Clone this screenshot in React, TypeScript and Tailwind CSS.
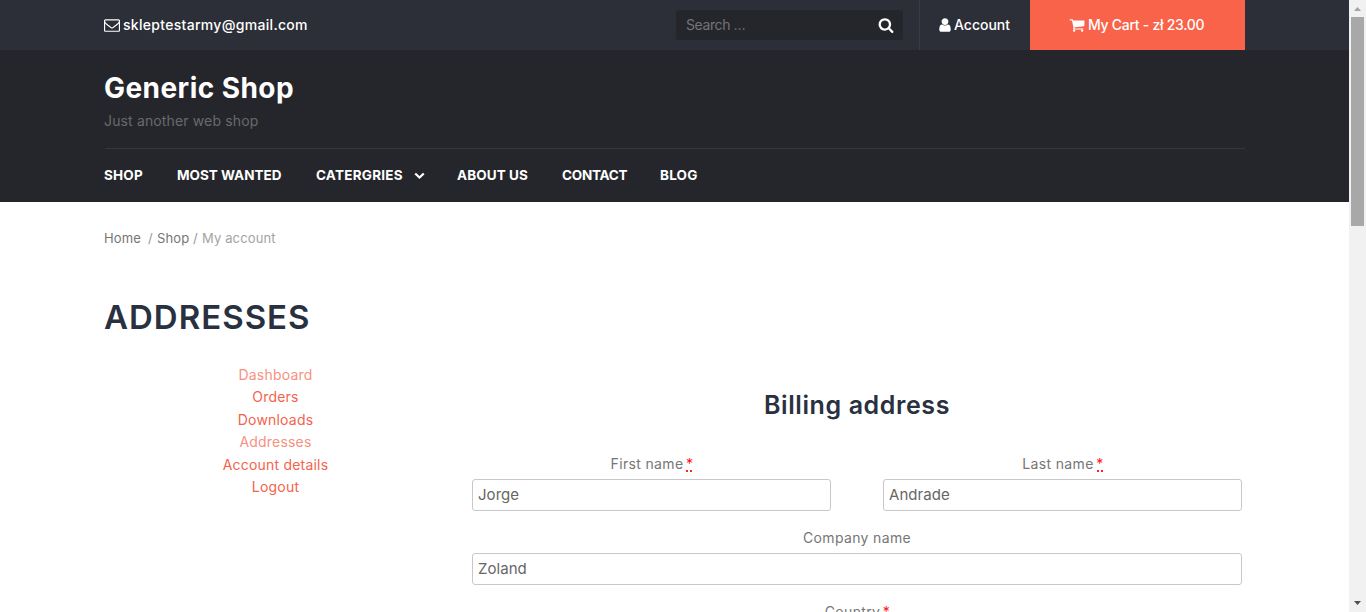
import type { ReactNode } from "react";

function Glyph({ d, className }: { d: string; className: string }) {
  return (
    <svg viewBox="0 0 1792 1792" fill="currentColor" className={className}>
      <path d={d} />
    </svg>
  );
}

const ENVELOPE =
  "M1664 1504v-768q-32 36-69 66-268 206-426 338-51 43-83 67t-86.5 48.5-102.5 24.5h-2q-48 0-102.5-24.5t-86.5-48.5-83-67q-158-132-426-338-37-30-69-66v768q0 13 9.5 22.5t22.5 9.5h1472q13 0 22.5-9.5t9.5-22.5zm0-1051v-24.5l-.5-13-3-12.5-5.5-9-9-7.5-14-2.5h-1472q-13 0-22.5 9.5t-9.5 22.5q0 168 147 284 193 152 401 317 6 5 35 29.5t46 37.5 44.5 31.5 50.5 27.5 43 9h2q20 0 43-9t50.5-27.5 44.5-31.5 46-37.5 35-29.5q208-165 401-317 54-43 100.5-115.5t46.5-131.5zm128-37v1088q0 66-47 113t-113 47h-1472q-66 0-113-47t-47-113v-1088q0-66 47-113t113-47h1472q66 0 113 47t47 113z";
const SEARCH =
  "M1216 832q0-185-131.5-316.5t-316.5-131.5-316.5 131.5-131.5 316.5 131.5 316.5 316.5 131.5 316.5-131.5 131.5-316.5zm512 832q0 52-38 90t-90 38q-54 0-90-38l-343-342q-179 124-399 124-143 0-273.5-55.5t-225-150-150-225-55.5-273.5 55.5-273.5 150-225 225-150 273.5-55.5 273.5 55.5 225 150 150 225 55.5 273.5q0 220-124 399l343 343q37 37 37 90z";
const USER =
  "M1536 1399q0 109-62.5 187t-150.5 78h-854q-88 0-150.5-78t-62.5-187q0-85 8.5-160.5t31.5-152 58.5-131 94-89 134.5-34.5q131 128 313 128t313-128q76 0 134.5 34.5t94 89 58.5 131 31.5 152 8.5 160.5zm-256-887q0 159-112.5 271.5t-271.5 112.5-271.5-112.5-112.5-271.5 112.5-271.5 271.5-112.5 271.5 112.5 112.5 271.5z";
const CART =
  "M704 1536q0 52-38 90t-90 38-90-38-38-90 38-90 90-38 90 38 38 90zm896 0q0 52-38 90t-90 38-90-38-38-90 38-90 90-38 90 38 38 90zm128-1088v512q0 24-16.5 42.5t-40.5 21.5l-1044 122q13 60 13 70 0 16-24 64h920q26 0 45 19t19 45-19 45-45 19h-1024q-26 0-45-19t-19-45q0-11 8-31.5t16-36 21.5-40 15.5-29.5l-177-823h-204q-26 0-45-19t-19-45 19-45 45-19h256q16 0 28.5 6.5t19.5 15.5 13 24.5 8 26 5.5 29.5 4.5 26h1201q26 0 45 19t19 45z";

const menu = [
  { label: "SHOP", box: "w-[73px] tracking-[0.2px]" },
  { label: "MOST WANTED", box: "w-[139px]" },
  { label: "CATERGRIES", box: "w-[141px] tracking-[0.25px]", arrow: true },
  { label: "ABOUT US", box: "w-[105px] tracking-[0.1px]" },
  { label: "CONTACT", box: "w-[98px] tracking-[-0.25px]" },
  { label: "BLOG", box: "tracking-[0.2px]" },
];

const links = [
  { label: "Dashboard", faded: true },
  { label: "Orders" },
  { label: "Downloads" },
  { label: "Addresses", faded: true },
  { label: "Account details" },
  { label: "Logout" },
];

function Label({ children, required }: { children: ReactNode; required?: boolean }) {
  return (
    <label className="flex h-[30px] items-center justify-center gap-[3px] pb-px whitespace-nowrap text-[14px] tracking-[0.35px] text-[#767676]">
      <span>{children}</span>
      {required && (
        <span className="mt-px flex h-4 w-[6px] items-start justify-center border-b-2 border-dotted border-[#ff2222] text-[14px] leading-4 tracking-normal text-[#ff1111]">
          *
        </span>
      )}
    </label>
  );
}

function Field({ value }: { value: string }) {
  return (
    <input
      defaultValue={value}
      className="block h-8 w-full rounded-[3px] border border-[#c8c8c8] bg-white px-[5px] pb-[2px] text-[15px] tracking-[0.05px] text-[#666666] outline-none"
    />
  );
}

export default function App() {
  return (
    <div className="flex h-[612px] w-[1366px] overflow-hidden bg-white font-['Inter',sans-serif]">
      <div className="w-[1349px] overflow-hidden">
        <div className="h-[50px] bg-[#2c2f38] text-white">
          <div className="ml-[104px] flex h-full w-[1141px] items-center">
            <Glyph d={ENVELOPE} className="h-4 w-4" />
            <span className="ml-[3px] pb-[2px] text-[14px] font-medium tracking-[0.3px]">skleptestarmy@gmail.com</span>
            <div className="ml-auto flex h-[30px] w-[227px] items-center justify-between rounded-[3px] bg-[#25262b] pr-[9px] pl-[10px]">
              <span className="pb-[2px] text-[14px] tracking-[-0.4px] text-[#737477]">Search …</span>
              <Glyph d={SEARCH} className="h-4 w-4" />
            </div>
            <div className="ml-4 flex h-full w-[111px] items-center border-l border-[#393c45] pl-[17px]">
              <Glyph d={USER} className="h-4 w-4" />
              <span className="ml-[1px] pb-[2px] text-[14px] font-medium">Account</span>
            </div>
            <div className="flex h-full w-[215px] items-center bg-[#f8634a] pl-[39px]">
              <Glyph d={CART} className="h-4 w-4" />
              <span className="ml-[3px] pb-[2px] text-[14px] font-medium tracking-[-0.28px]">My Cart - zł 23.00</span>
            </div>
          </div>
        </div>

        <header className="h-[152px] bg-[#25262b] text-white">
          <div className="ml-[105px] w-[1140px]">
            <div className="h-[99px] border-b border-[#36373c] pt-[17px]">
              <h1 className="-ml-px h-10 text-[28px] leading-[42px] font-bold tracking-[0.45px]">Generic Shop</h1>
              <p className="mt-1 -ml-px text-[14px] leading-5 tracking-[0.14px] text-[#696969]">Just another web shop</p>
            </div>
            <nav className="-ml-px flex h-[53px] items-center text-[13.5px] font-bold whitespace-nowrap">
              {menu.map((m) => (
                <div key={m.label} className={`flex items-center ${m.box}`}>
                  {m.label}
                  {m.arrow && (
                    <svg viewBox="0 0 11 8" className="ml-[11px] h-2 w-[11px]" fill="none" stroke="currentColor" strokeWidth="2.2">
                      <path d="M1.2 1.5 5.5 5.6 9.8 1.5" />
                    </svg>
                  )}
                </div>
              ))}
            </nav>
          </div>
        </header>

        <main className="ml-[105px] w-[1140px]">
          <div className="-ml-px flex h-[73px] items-center text-[13px] tracking-[0.13px] text-[#757575]">
            <span className="w-[44px]">Home</span>
            <span className="w-[9px] text-[#999999]">/</span>
            <span className="w-[36px]">Shop</span>
            <span className="w-[9px] text-[#999999]">/</span>
            <span className="text-[#a3a3a3]">My account</span>
          </div>
          <h2 className="-ml-px mt-[18px] h-12 text-[33px] leading-[49px] font-semibold tracking-[1px] text-[#29303f]">ADDRESSES</h2>

          <div className="flex">
            <ul className="mt-[23px] w-[341px] text-center text-[14px] leading-[22.4px] tracking-[0.2px] text-[#f6624c]">
              {links.map((l) => (
                <li key={l.label} className={l.faded ? "opacity-70" : ""}>
                  {l.label}
                </li>
              ))}
            </ul>
            <section className="ml-[26px] w-[770px]">
              <h3 className="mt-[43px] h-10 text-center text-[25px] leading-[42px] font-semibold tracking-[0.6px] text-[#29303f]">
                Billing address
              </h3>
              <div className="mt-[25px] flex justify-between">
                <div className="w-[359px]">
                  <Label required>First name</Label>
                  <Field value="Jorge" />
                </div>
                <div className="w-[359px]">
                  <Label required>Last name</Label>
                  <Field value="Andrade" />
                </div>
              </div>
              <div className="mt-3">
                <Label>Company name</Label>
                <Field value="Zoland" />
              </div>
              <div className="mt-3">
                <Label required>Country</Label>
              </div>
            </section>
          </div>
        </main>
      </div>

      <div className="flex w-[17px] flex-col items-center justify-between bg-[#f1f1f1]">
        <div className="flex flex-col items-center">
          <svg viewBox="0 0 17 17" className="h-[17px] w-[17px]" fill="#a3a3a3">
            <path d="M5 11 8.5 7 12 11z" />
          </svg>
          <div className="h-[209px] w-[13px] bg-[#a8a8a8]" />
        </div>
        <svg viewBox="0 0 17 17" className="h-[17px] w-[17px]" fill="#505050">
          <path d="M5 6 8.5 10 12 6z" />
        </svg>
      </div>
    </div>
  );
}
